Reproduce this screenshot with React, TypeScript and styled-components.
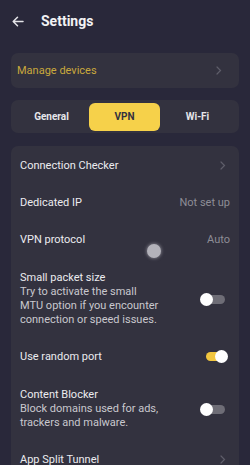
import React from 'react';
import styled, { createGlobalStyle } from 'styled-components';

const Global = createGlobalStyle`
  html, body {
    margin: 0;
    padding: 0;
    background: #29283a;
  }
  body {
    font-family: Roboto, 'Noto Sans', sans-serif;
    -webkit-font-smoothing: antialiased;
  }
`;

const Screen = styled.div`
  position: relative;
  width: 250px;
  height: 465px;
  overflow: hidden;
  background: #29283a;
  display: flex;
  flex-direction: column;
`;

const Header = styled.div`
  flex-shrink: 0;
  height: 42px;
  display: flex;
  align-items: center;
  padding-left: 12px;
  gap: 17px;
`;

const Title = styled.h1`
  margin: 0;
  font-size: 14px;
  font-weight: 700;
  color: #f2f2f4;
`;

const Body = styled.div`
  flex-shrink: 0;
  display: flex;
  flex-direction: column;
  padding: 11px 11px 0;
  gap: 12px;
`;

const Card = styled.div`
  flex-shrink: 0;
  background: #33323f;
  border-radius: 7px;
  display: flex;
  flex-direction: column;
`;

const LinkRow = styled.div`
  height: 35px;
  display: flex;
  align-items: center;
  justify-content: space-between;
  padding: 0 13px 0 6px;
`;

const LinkText = styled.span`
  font-size: 11px;
  color: #c9a83c;
`;

const Tabs = styled.div`
  flex-shrink: 0;
  height: 33px;
  background: #33323f;
  border-radius: 7px;
  display: grid;
  grid-template-columns: 1fr 71px 1fr;
  align-items: center;
  padding: 0 4px 0 3px;
`;

const Tab = styled.div<{ $active?: boolean }>`
  height: 28px;
  display: flex;
  align-items: center;
  justify-content: center;
  border-radius: 6px;
  font-size: 10px;
  font-weight: 700;
  color: ${p => (p.$active ? '#33323f' : '#e6e6ea')};
  background: ${p => (p.$active ? '#f6d14a' : 'transparent')};
`;

const List = styled(Card)`
  margin-top: 1px;
  padding-top: 1px;
`;

const Row = styled.div<{ $tall?: boolean }>`
  min-height: 37px;
  display: flex;
  align-items: center;
  justify-content: space-between;
  padding: ${p => (p.$tall ? '13px 9px 11px 9px' : '0 9px')};
  box-sizing: border-box;
  gap: 10px;
`;

const Texts = styled.div`
  display: flex;
  flex-direction: column;
`;

const Label = styled.span`
  font-size: 11px;
  line-height: 14px;
  color: #ececef;
`;

const Desc = styled.span`
  font-size: 11px;
  line-height: 14px;
  color: #c9c8ce;
  max-width: 142px;
`;

const Value = styled.span`
  font-size: 11px;
  color: #8e8d96;
`;

const Toggle = styled.div<{ $on?: boolean }>`
  position: relative;
  flex-shrink: 0;
  width: 21px;
  height: 9px;
  border-radius: 5px;
  margin-right: ${p => (p.$on ? '3px' : '5px')};
  background: ${p => (p.$on ? '#f2c63f' : '#6e6d76')};

  &::after {
    content: '';
    position: absolute;
    top: -2px;
    left: ${p => (p.$on ? '9px' : '-4px')};
    width: 13px;
    height: 13px;
    border-radius: 50%;
    background: #ffffff;
  }
`;

const Touch = styled.div`
  position: absolute;
  left: 147px;
  top: 244px;
  width: 14px;
  height: 14px;
  border-radius: 50%;
  background: #b3b2ba;
  box-shadow: 0 0 3px 1px rgba(150, 149, 158, 0.6);
`;

const Chevron = () => (
  <svg width="6" height="9" viewBox="0 0 6 9" style={{ marginRight: 4 }}>
    <path d="M1 1 L4.5 4.5 L1 8" fill="none" stroke="#5f5e6a" strokeWidth="1.2" strokeLinecap="round" />
  </svg>
);

const BackArrow = () => (
  <svg width="12" height="11" viewBox="0 0 12 11">
    <path
      d="M11 5.5 H1.5 M5.5 1.2 L1.2 5.5 L5.5 9.8"
      fill="none"
      stroke="#e4e4e8"
      strokeWidth="1.5"
      strokeLinecap="round"
      strokeLinejoin="round"
    />
  </svg>
);

export default function App() {
  return (
    <Screen>
      <Global />
      <Header>
        <BackArrow />
        <Title>Settings</Title>
      </Header>
      <Body>
        <Card>
          <LinkRow>
            <LinkText>Manage devices</LinkText>
            <Chevron />
          </LinkRow>
        </Card>
        <Tabs>
          <Tab>General</Tab>
          <Tab $active>VPN</Tab>
          <Tab>Wi-Fi</Tab>
        </Tabs>
        <List>
          <Row>
            <Label>Connection Checker</Label>
            <Chevron />
          </Row>
          <Row>
            <Label>Dedicated IP</Label>
            <Value>Not set up</Value>
          </Row>
          <Row>
            <Label>VPN protocol</Label>
            <Value>Auto</Value>
          </Row>
          <Row $tall>
            <Texts>
              <Label>Small packet size</Label>
              <Desc>Try to activate the small MTU option if you encounter connection or speed issues.</Desc>
            </Texts>
            <Toggle />
          </Row>
          <Row>
            <Label>Use random port</Label>
            <Toggle $on />
          </Row>
          <Row $tall>
            <Texts>
              <Label>Content Blocker</Label>
              <Desc>Block domains used for ads, trackers and malware.</Desc>
            </Texts>
            <Toggle />
          </Row>
          <Row>
            <Label>App Split Tunnel</Label>
            <Chevron />
          </Row>
        </List>
      </Body>
      <Touch />
    </Screen>
  );
}
